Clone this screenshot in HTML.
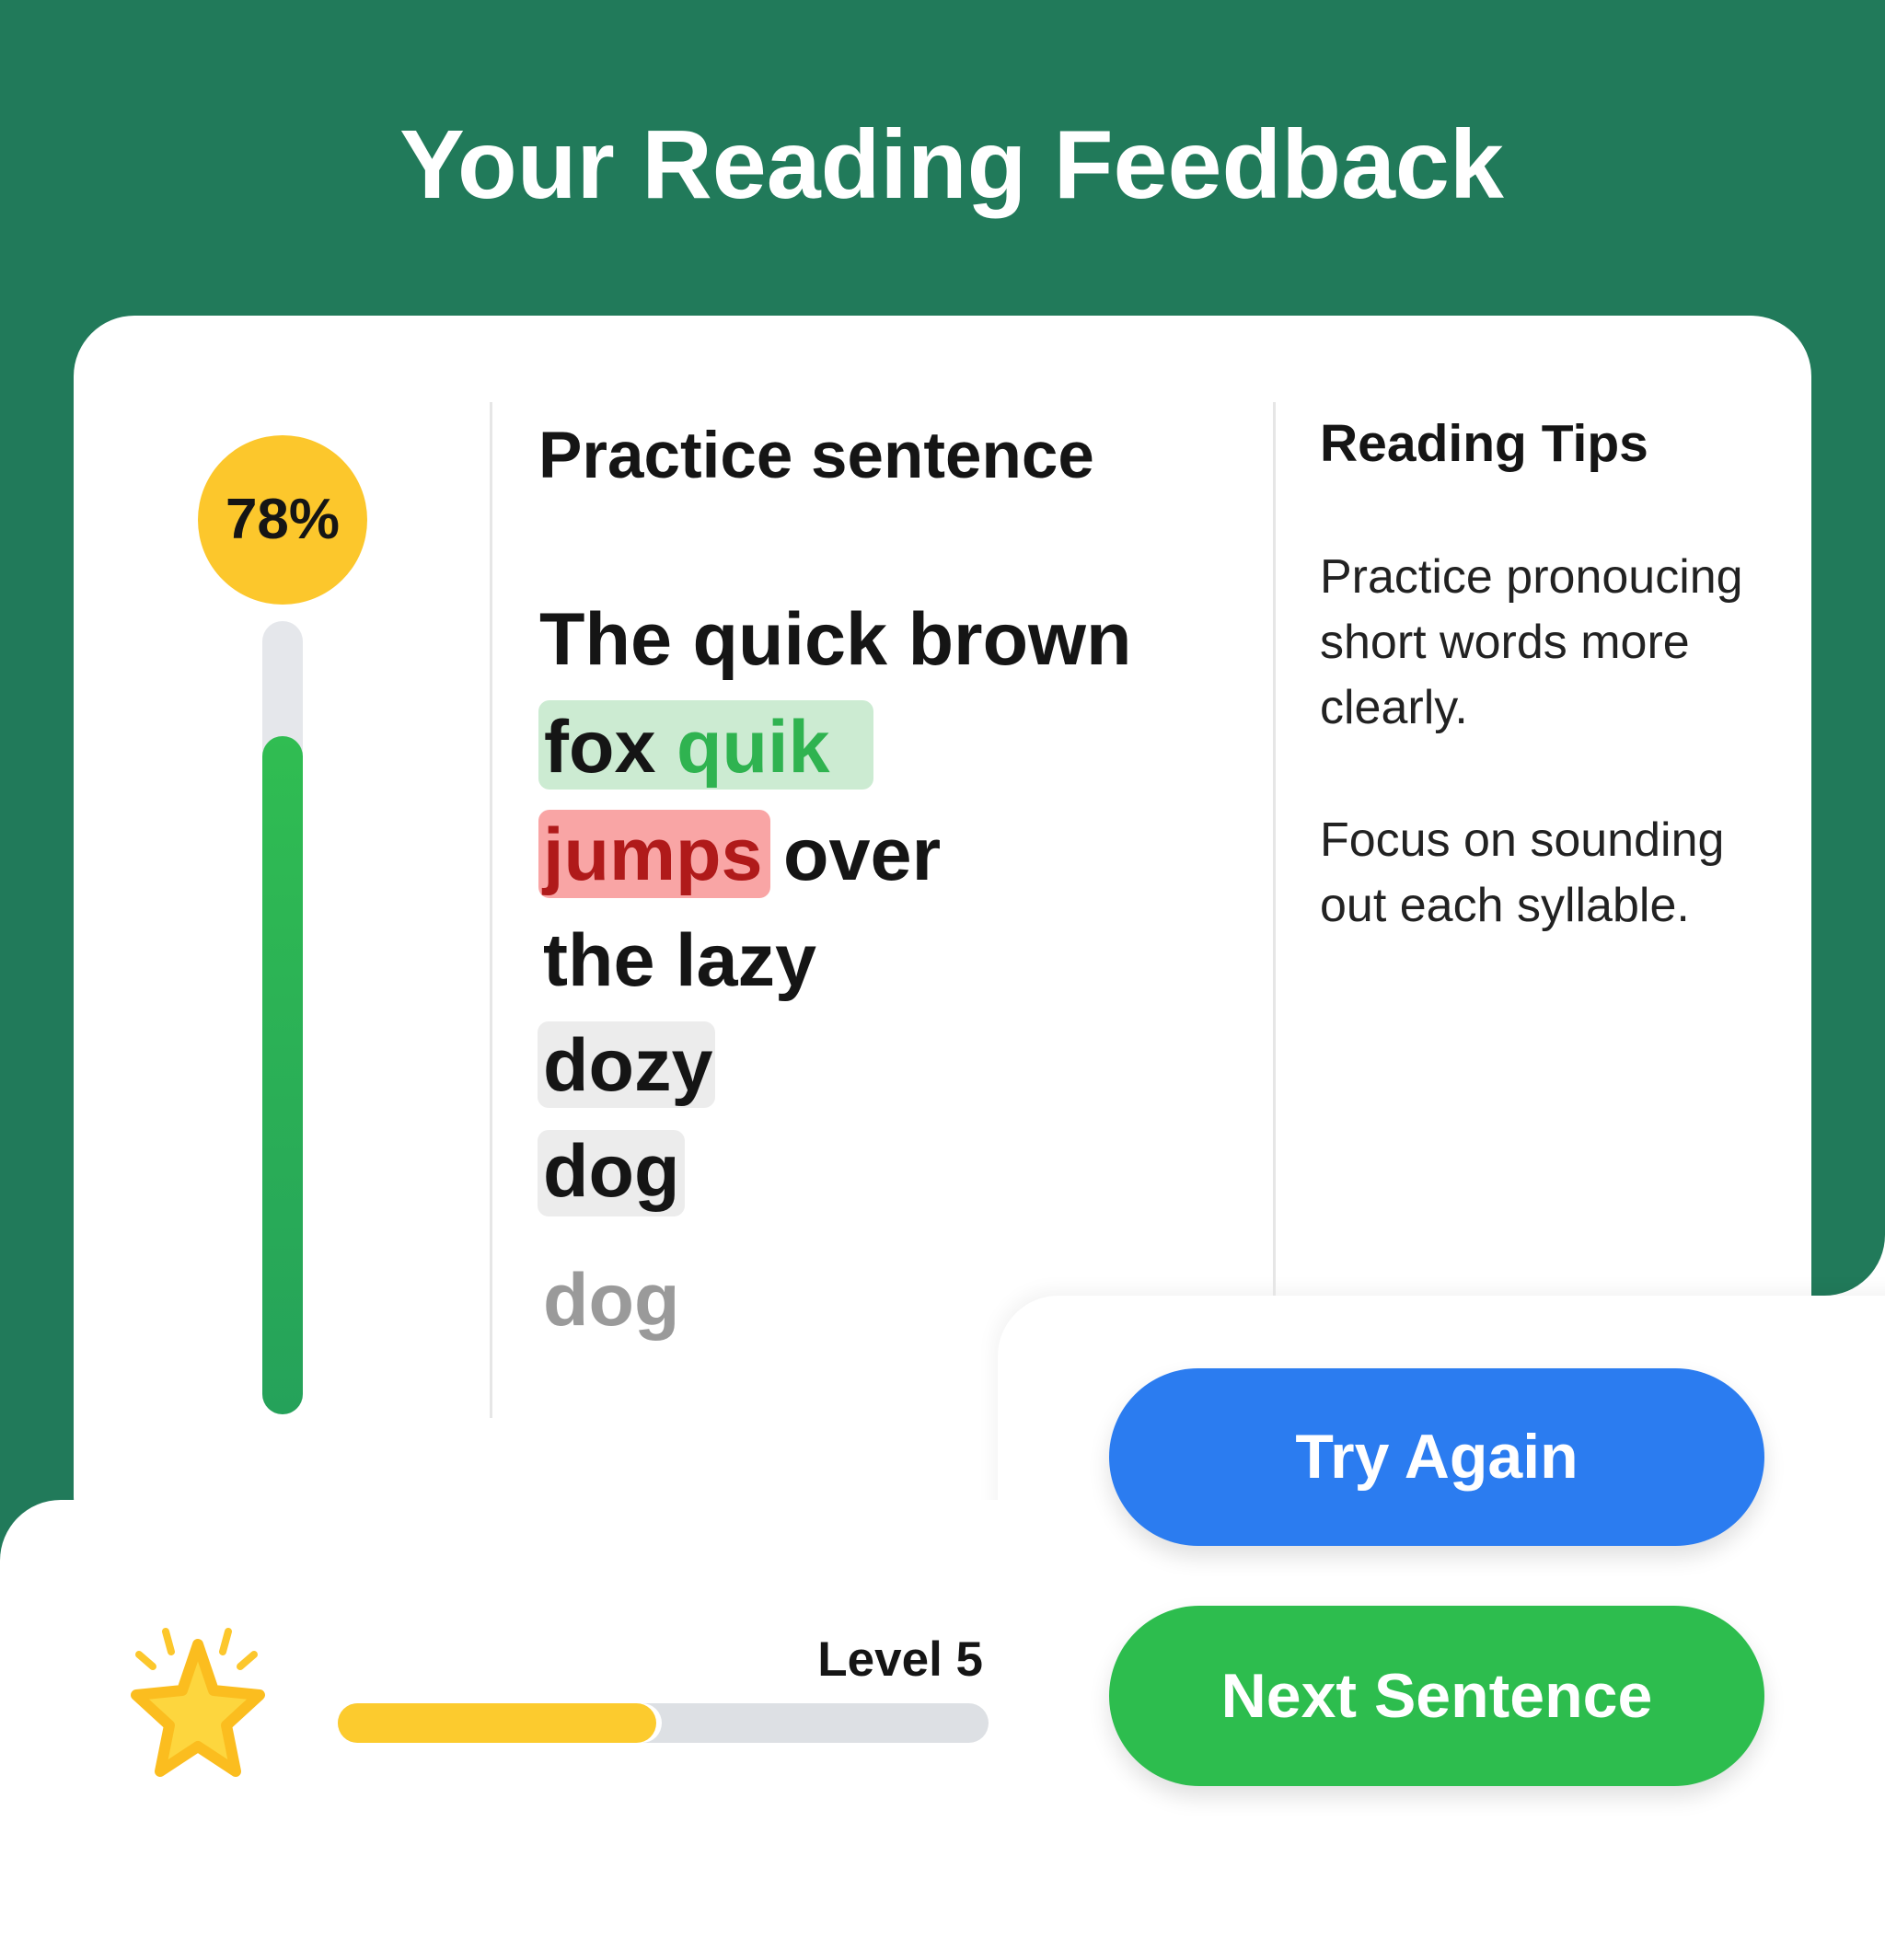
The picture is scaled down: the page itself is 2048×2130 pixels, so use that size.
<!DOCTYPE html>
<html><head><meta charset="utf-8"><style>
*{margin:0;padding:0;box-sizing:border-box}
body{width:2048px;height:2048px;background:#217a5a;position:relative;overflow:hidden;font-family:"Liberation Sans",sans-serif;color:#151515}
.a{position:absolute}
h1{position:absolute;left:0;width:2068px;text-align:center;top:126px;font-size:106px;font-weight:700;color:#fff;line-height:1}
.card{left:80px;top:343px;width:1888px;height:1350px;background:#fff;border-radius:66px}
.rp{left:1084px;top:1408px;width:1000px;height:700px;background:#fff;border-top-left-radius:66px;box-shadow:-4px -6px 20px rgba(0,0,0,.05)}
.bp{left:0;top:1630px;width:2048px;height:500px;background:#fff;border-top-left-radius:66px}
.gc{left:1968px;top:1340px;width:80px;height:68px;background:#fff}
.gc2{left:1968px;top:1340px;width:80px;height:68px;background:#217a5a;border-bottom-right-radius:66px}
.w{font-size:81px;font-weight:700;line-height:1}
.tip{font-size:52px;color:#222;line-height:71px}
.btn{border-radius:100px;color:#fff;font-weight:700;font-size:68px;text-align:center;box-shadow:0 12px 24px rgba(0,0,0,.12)}
</style></head><body>
<h1>Your Reading Feedback</h1>
<div class="a card"></div>
<div class="a gc"></div><div class="a gc2"></div>
<div class="a rp"></div>
<div class="a bp"></div>

<div class="a" style="left:215px;top:473px;width:184px;height:184px;border-radius:50%;background:#fcc72c;font-size:62px;font-weight:700;line-height:184px;text-align:center">78%</div>
<div class="a" style="left:285px;top:675px;width:44px;height:862px;border-radius:22px;background:#e5e7eb"></div>
<div class="a" style="left:285px;top:800px;width:44px;height:737px;border-radius:22px;background:linear-gradient(#30bd52,#25a25a)"></div>
<div class="a" style="left:532px;top:437px;width:3px;height:1104px;background:#e6e6e6"></div>
<div class="a" style="left:1383px;top:437px;width:3px;height:971px;background:#e6e6e6"></div>

<div class="a" style="left:585px;top:455px;font-size:71px;font-weight:700">Practice sentence</div>
<div class="a" style="left:586px;top:655px" ><span class="w">The quick brown</span></div>
<div class="a" style="left:585px;top:761px;width:364px;height:97px;border-radius:12px;background:#ccebd2"></div>
<div class="a w" style="left:591px;top:772px">fox <span style="color:#2fb350">quik</span></div>
<div class="a" style="left:585px;top:880px;width:252px;height:96px;border-radius:12px;background:#f9a5a5"></div>
<div class="a w" style="left:590px;top:889px"><span style="color:#b01a1a">jumps</span> over</div>
<div class="a w" style="left:590px;top:1004px">the lazy</div>
<div class="a" style="left:584px;top:1110px;width:193px;height:94px;border-radius:12px;background:#ececec"></div>
<div class="a w" style="left:590px;top:1118px">dozy</div>
<div class="a" style="left:584px;top:1228px;width:160px;height:94px;border-radius:12px;background:#ececec"></div>
<div class="a w" style="left:590px;top:1233px">dog</div>
<div class="a w" style="left:590px;top:1373px;color:#9a9a9a">dog</div>

<div class="a" style="left:1434px;top:449px;font-size:57px;font-weight:700">Reading Tips</div>
<div class="a tip" style="left:1434px;top:592px">Practice pronoucing<br>short words more<br>clearly.</div>
<div class="a tip" style="left:1434px;top:878px">Focus on sounding<br>out each syllable.</div>

<div class="a btn" style="left:1205px;top:1487px;width:712px;height:193px;line-height:193px;background:#2b7cf0">Try Again</div>
<div class="a btn" style="left:1205px;top:1745px;width:712px;height:196px;line-height:196px;background:#2dbd4e">Next Sentence</div>

<svg class="a" style="left:130px;top:1765px" width="170" height="170" viewBox="0 0 170 170">
<g stroke="#fcc72c" stroke-width="8" stroke-linecap="round">
<line x1="50" y1="8" x2="56" y2="30"/><line x1="118" y1="8" x2="112" y2="30"/>
<line x1="21" y1="33" x2="36" y2="46"/><line x1="146" y1="33" x2="131" y2="46"/></g>
<path d="M85 22 L102 72 L152 77 L116 110 L126 160 L85 133 L44 160 L54 110 L18 77 L68 72 Z" fill="#fdd63e" stroke="#fbbd1f" stroke-width="12" stroke-linejoin="round"/>
</svg>
<div class="a" style="left:800px;top:1773px;width:268px;text-align:right;font-size:53px;font-weight:700">Level 5</div>
<div class="a" style="left:367px;top:1851px;width:707px;height:43px;border-radius:22px;background:#dde0e4"></div>
<div class="a" style="left:367px;top:1851px;width:346px;height:43px;border-radius:22px;background:#fccb2e;box-shadow:6px 0 0 #fff"></div>
</body></html>
